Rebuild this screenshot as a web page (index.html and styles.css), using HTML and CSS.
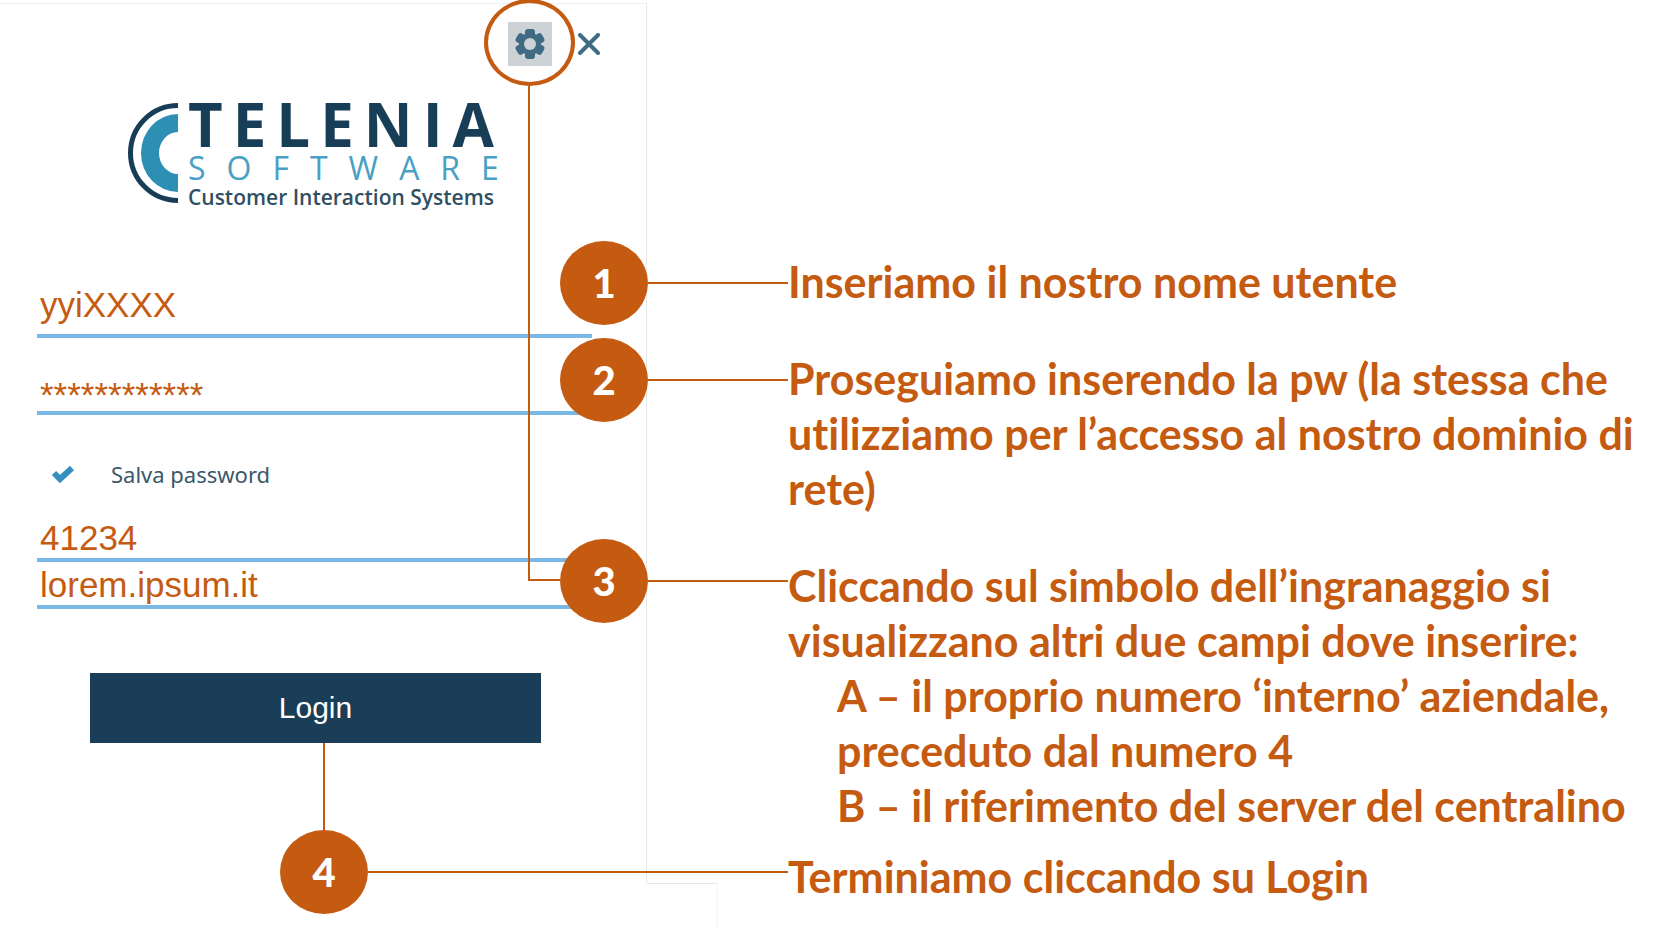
FILE: index.html
```html
<!DOCTYPE html>
<html lang="it">
<head>
<meta charset="utf-8">
<title>Telenia Software – Login</title>
<link rel="stylesheet" href="styles.css">
</head>
<body>
<main class="guide">
  <section class="panel">
    <header class="tools">
      <button class="tool tool-gear" type="button" aria-label="Impostazioni">
        <svg viewBox="0 0 44 44" width="44" height="44" aria-hidden="true">
          <g fill="#3f6b85">
            <rect x="17" y="7" width="10" height="30" rx="3"/>
            <rect x="17" y="7" width="10" height="30" rx="3" transform="rotate(60 22 22)"/>
            <rect x="17" y="7" width="10" height="30" rx="3" transform="rotate(120 22 22)"/>
            <circle cx="22" cy="22" r="11"/>
          </g>
          <circle cx="22" cy="22" r="6" fill="#ccd2d5"/>
        </svg>
        <span class="ring"></span>
        <span class="gear-line"></span>
      </button>
      <button class="tool tool-close" type="button" aria-label="Chiudi">
        <svg viewBox="0 0 22 22" width="22" height="22" aria-hidden="true">
          <path d="M2 2 20 20M20 2 2 20" stroke="#3f6b85" stroke-width="4" stroke-linecap="round"/>
        </svg>
      </button>
    </header>

    <div class="logo">
      <svg class="logo-mark" viewBox="0 0 50 100" width="50" height="100" aria-hidden="true">
        <path d="M50 2.500A47.500 47.500 0 0 0 50 97.500" fill="none" stroke="#183d57" stroke-width="5"/>
        <path d="M50 11A37 39 0 0 0 50 89V71A19 21 0 0 1 50 29Z" fill="#2e8fb5"/>
      </svg>
      <div class="logo-text">
        <span class="logo-name">TELENIA</span>
        <span class="logo-sub">SOFTWARE</span>
        <span class="logo-tag">Customer Interaction Systems</span>
      </div>
    </div>

    <form class="form">
      <input class="field field-user" type="text" aria-label="Nome utente" value="yyiXXXX">
      <input class="field field-masked" type="text" aria-label="Password" value="************">
      <label class="save">
        <input class="save-box" type="checkbox" checked>
        <svg class="save-tick" viewBox="0 0 24 20" width="24" height="20" aria-hidden="true">
          <path d="M3 9 9 15 21 4" fill="none" stroke="#3590c0" stroke-width="6"/>
        </svg>
        <span>Salva password</span>
      </label>
      <input class="field" type="text" aria-label="Numero interno" value="41234">
      <input class="field field-server" type="text" aria-label="Server" value="lorem.ipsum.it">
      <button class="login" type="button">Login<span class="login-line"></span></button>
    </form>
  </section>
  <div class="corner"></div>

  <ol class="steps">
    <li class="step">
      <span class="marker"><b class="badge">1</b><i class="leader"></i></span>
      Inseriamo il nostro nome utente
    </li>
    <li class="step">
      <span class="marker"><b class="badge">2</b><i class="leader"></i></span>
      Proseguiamo inserendo la pw (la stessa che<br>utilizziamo per l’accesso al nostro dominio di<br>rete)
    </li>
    <li class="step">
      <span class="marker marker-high"><b class="badge">3</b><i class="leader"></i></span>
      Cliccando sul simbolo dell’ingranaggio si<br>visualizzano altri due campi dove inserire:
      <p class="sub">A – il proprio numero ‘interno’ aziendale,<br>preceduto dal numero 4</p>
      <p class="sub">B – il riferimento del server del centralino</p>
    </li>
    <li class="step step-last">
      <span class="marker marker-high marker-far"><b class="badge">4</b><i class="leader"></i></span>
      Terminiamo cliccando su Login
    </li>
  </ol>
</main>
</body>
</html>
```
FILE: styles.css
```css
* { box-sizing: border-box; }

body {
  margin: 0;
  background: #fff;
  color: #c55a11;
  font-family: Lato, "Open Sans", sans-serif;
}

.guide {
  display: grid;
  grid-template-columns: 647px 71px minmax(0, 1fr);
  align-items: start;
  min-height: 100vh;
  padding-top: 3px;
  overflow: hidden;
}

/* Login panel */
.panel {
  padding: 18px 54px 140px 37px;
  border-top: 1px solid #f0f0f0;
  border-right: 1px solid #e8e8e8;
}

.tools {
  display: flex;
  justify-content: flex-end;
  align-items: center;
  gap: 26px;
  margin-right: -8px;
}

.tool {
  position: relative;
  display: block;
  padding: 0;
  border: 0;
  background: none;
}

.tool svg { display: block; }
.tool-gear { background: #ccd2d5; }

.ring {
  position: absolute;
  inset: -23px -23px -20px -24px;
  border: 4px solid #c55a11;
  border-radius: 50%;
}

.gear-line {
  position: absolute;
  top: 64px;
  left: 20px;
  width: 32px;
  height: 495px;
  border: solid #c55a11;
  border-width: 0 0 2px 2px;
}

.logo {
  display: flex;
  gap: 10px;
  margin: 37px 0 0 91px;
}

.logo-text {
  display: flex;
  flex-direction: column;
  font-family: "Open Sans", "Noto Sans", sans-serif;
  white-space: nowrap;
}

.logo-name {
  color: #183d57;
  font-size: 60px;
  font-weight: 700;
  line-height: 42px;
  letter-spacing: 10px;
}

.logo-sub {
  margin-top: 7px;
  color: #4a9fc4;
  font-size: 32px;
  line-height: 32px;
  letter-spacing: 21px;
}

.logo-tag {
  color: #2f4f63;
  font-size: 21px;
  font-weight: 600;
  line-height: 26px;
}

.form {
  display: flex;
  flex-direction: column;
  margin-top: 75px;
}

.field {
  width: 100%;
  height: 44px;
  padding: 0 3px;
  border: 0;
  border-bottom: 4px solid #7ab8e6;
  border-radius: 0;
  background: none;
  color: #c55a11;
  font-family: "Liberation Sans", Arial, sans-serif;
  font-size: 35px;
  line-height: 40px;
}

.field-user { height: 53px; padding-bottom: 9px; }
.field-masked { height: 34px; margin-top: 43px; padding-bottom: 2px; line-height: 28px; }
.field-server { margin-top: 3px; }

.save {
  display: flex;
  align-items: center;
  gap: 36px;
  height: 32px;
  margin: 43px 0 28px 14px;
  color: #3a586c;
  font-family: "Noto Sans", "Open Sans", sans-serif;
  font-size: 22px;
}

.save-box {
  position: absolute;
  opacity: 0;
}

.login {
  position: relative;
  height: 70px;
  margin: 64px 51px 0 53px;
  border: 0;
  background: #1a3e58;
  color: #fff;
  font-family: "Liberation Sans", Arial, sans-serif;
  font-size: 30px;
}

.login-line {
  position: absolute;
  top: 100%;
  left: 233px;
  width: 2px;
  height: 88px;
  background: #c55a11;
}

.corner {
  height: 45px;
  margin-top: 880px;
  border-top: 1px solid #e8e8e8;
  border-right: 1px solid #f6f6f6;
}

.panel,
.corner,
.steps { grid-row: 1; }

/* Numbered notes */
.steps {
  display: flex;
  flex-direction: column;
  gap: 42px;
  margin: 0;
  padding: 251px 0 0 70px;
  list-style: none;
  font-size: 43px;
  font-weight: 700;
  font-variant-ligatures: none;
  line-height: 55px;
  white-space: nowrap;
}

.step { position: relative; }
.step-last { margin-top: -26px; }

.sub {
  margin: 0;
  padding-left: 49px;
}

.marker {
  position: absolute;
  top: -13px;
  right: 100%;
  display: flex;
  align-items: center;
  width: 228px;
}

.marker-high { top: -19px; }
.marker-far { width: 508px; }

.badge {
  flex: none;
  width: 88px;
  height: 84px;
  border-radius: 50%;
  background: #c55a11;
  color: #fff;
  font-size: 40px;
  line-height: 84px;
  text-align: center;
}

.leader {
  flex: 1;
  height: 2px;
  background: #c55a11;
}
```
